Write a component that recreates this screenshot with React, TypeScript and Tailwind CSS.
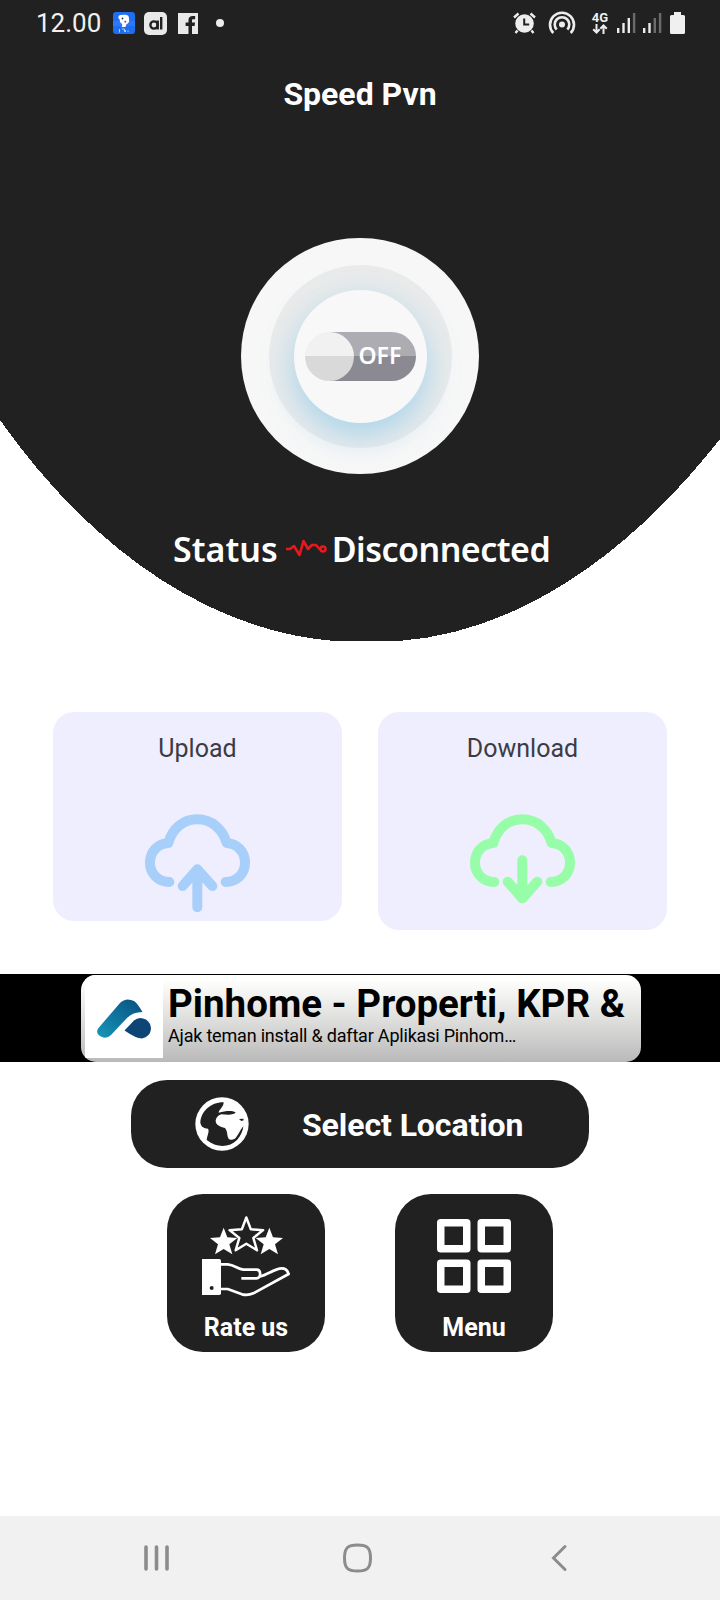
import type { ReactNode } from "react";

const INK = "#212121";

function StatusBar() {
  return (
    <div className="flex h-[46px] items-center pl-[36px] pr-[35px] text-[#f0f0f0]">
      <span className="w-[77px] text-[26px] leading-none">12.00</span>

      <svg width="22" height="22" viewBox="0 0 22 22">
        <rect width="22" height="22" rx="3" fill="#1f6df0" />
        <path d="M0 9h22v5H0z" fill="#3a86f7" opacity=".5" />
        <path d="M5.500 4.500C6 3 8 3 10 2.800c4-.4 6.500 1 6 4.200.8 2-.5 4.500-2.800 5.500L12.500 15H8.800l.4-3C7 11 6.500 9 6.800 7.500 5.500 7 5.200 5.500 5.500 4.500z" fill="#fff" />
        <circle cx="9.500" cy="6.500" r=".9" fill="#234" />
        <circle cx="12.300" cy="9.800" r="1" fill="#d43a4a" />
        <path d="M6.500 17v3.500M9 17h2.500v3M12.500 18v2M15 18.500v1.500" stroke="#a9cdfb" strokeWidth="1" fill="none" />
      </svg>

      <span className="ml-[9px] flex h-[23px] w-[23px] items-center justify-center rounded-[5px] bg-[#e9e9e9]">
        <svg width="14" height="13" viewBox="0 0 14 13" fill="none" stroke={INK} strokeWidth="2.400">
          <circle cx="5" cy="8" r="3.600" />
          <path d="M8.700 3.500v9M12.200 0v12.500" />
        </svg>
      </span>

      <svg className="ml-[11px]" width="20" height="21" viewBox="0 0 21 21" preserveAspectRatio="none">
        <path d="M0 0h21v21H0z" fill="#e9e9e9" />
        <path d="M11 21v-8H8v-3.400h3V7.200C11 4.300 12.700 3 15.500 3H18v3.300h-2c-1 0-1.300.5-1.300 1.400v1.900h3.200L17.400 13h-2.700v8z" fill={INK} />
      </svg>

      <span className="ml-[18px] h-2 w-2 rounded-full bg-[#ededed]" />

      <div className="ml-auto flex items-center">
        {/* alarm */}
        <svg width="23" height="22" viewBox="0 0 23 22">
          <circle cx="11.500" cy="11.500" r="9.300" fill="#ededed" />
          <path d="M1 5.500l4.500-4M22 5.500l-4.500-4M4.500 18.500L2.500 21M18.500 18.500l2 2.500" stroke="#ededed" strokeWidth="2.400" />
          <path d="M11.200 6.500v6h5" stroke={INK} strokeWidth="2" fill="none" />
        </svg>
        {/* hotspot */}
        <svg className="ml-[12px]" width="28" height="24" viewBox="0 0 28 24" fill="none" stroke="#ededed" strokeWidth="2.600">
          <path d="M5.300 22A12 12 0 1 1 22.700 22" />
          <path d="M8.700 18.500a7.300 7.300 0 1 1 10.600 0" />
          <circle cx="14" cy="13.500" r="3" fill="#ededed" stroke="none" />
        </svg>
        <div className="ml-[15px] flex w-[18px] flex-col items-center">
          <span className="text-[13px] font-bold leading-[12px]">4G</span>
          <svg width="16" height="10" viewBox="0 0 16 10" fill="none" stroke="#ededed" strokeWidth="2">
            <path d="M4.500 0v8M1.200 5.200l3.300 3.300 3.200-3.300M11.500 10V2M8.300 4.800l3.200-3.300 3.300 3.300" />
          </svg>
        </div>
        <Signal className="ml-[8px]" strong={3} />
        <Signal className="ml-[7px]" strong={2} />
        <svg className="ml-[8px]" width="15" height="22" viewBox="0 0 15 22" fill="#f0f0f0">
          <path d="M4 0h7v3h2.500A1.500 1.500 0 0 1 15 4.500v16a1.500 1.500 0 0 1-1.500 1.500h-12A1.500 1.500 0 0 1 0 20.500v-16A1.500 1.500 0 0 1 1.500 3H4z" />
        </svg>
      </div>
    </div>
  );
}

function Signal({ strong, className }: { strong: number; className: string }) {
  const heights = [5, 10, 15, 20];
  return (
    <svg className={className} width="19" height="20" viewBox="0 0 19 20">
      {heights.map((h, i) => (
        <rect key={h} x={i * 5.3} y={20 - h} width="2.400" height={h} fill={i < strong ? "#ededed" : "#6b6b6b"} />
      ))}
    </svg>
  );
}

function PowerToggle() {
  return (
    <div className="flex h-[236px] w-[238px] items-center justify-center overflow-hidden rounded-full bg-[#f7f7f7]">
      <div className="flex h-[183px] w-[183px] items-center justify-center rounded-full bg-[#eaebeb]">
        <div className="flex h-[133px] w-[133px] items-center justify-center rounded-full bg-[#f8f8f8] shadow-[0_12px_32px_0px_rgba(150,205,235,0.8)]">
          <div className="flex h-[49px] w-[111px] items-center">
            <div className="z-10 h-[49px] w-[49px] shrink-0 rounded-full bg-[linear-gradient(#f1f1f1_50%,#d9d9d9_50%)]" />
            <div className="-ml-[25px] flex h-[49px] w-[87px] items-center rounded-r-full bg-[linear-gradient(#adacb3_50%,#8b8991_50%)] pb-px pl-[30px]">
              <span className="font-['Noto_Sans'] text-[23px] font-semibold leading-none text-white">OFF</span>
            </div>
          </div>
        </div>
      </div>
    </div>
  );
}

function CloudCard({ label, color, className, arrow }: { label: string; color: string; className: string; arrow: string }) {
  return (
    <div className={`flex w-[289px] flex-col items-center rounded-[21px] bg-[#efeeff] pt-[21px] ${className}`}>
      <span className="text-[25px] leading-8 text-[#3c3c44]">{label}</span>
      <svg
        className="mt-[48px]"
        width="107"
        height="100"
        viewBox="312 338 321 300"
        fill="none"
        stroke={color}
        strokeWidth="30"
        strokeLinecap="round"
        strokeLinejoin="round"
      >
        <path d="M388 545C355 545 330 520 330 487C330 454 353 430 385 428C397 384 430 357 472 357C514 357 548 385 560 428C592 430 615 454 615 487C615 520 590 545 557 545" />
        <path d={arrow} />
      </svg>
    </div>
  );
}

function AdBanner() {
  return (
    <div className="mt-[44px] flex h-[88px] justify-center bg-black pl-[2px] pt-px">
      <div className="flex h-[87px] w-[560px] overflow-hidden rounded-[15px] bg-[linear-gradient(#fffffd_5%,#e3e4e2_45%,#b9b9b9)]">
        <div className="ml-[4px] flex h-[83px] w-[78px] items-center justify-center bg-white">
          <svg className="mt-[5px]" width="54" height="40" viewBox="0 0 54 40">
            <defs>
              <linearGradient id="pinA" x1="0" y1="1" x2="1" y2="0">
                <stop offset="0" stopColor="#1597b8" />
                <stop offset="1" stopColor="#0a4f80" />
              </linearGradient>
            </defs>
            <path d="M1.500 29L23 4Q29-2 37 2Q41 5 45.500 13Q35 13 29 20L14 36Q9 41 3 37Q-2 34 1.500 29Z" fill="url(#pinA)" />
            <path d="M27.500 31.500L37 21.500Q42 17 49 20.500Q54 24 54 30Q53 38 45 39.500Q39 39.500 27.500 31.500Z" fill="#0d4577" />
          </svg>
        </div>
        <div className="ml-[5px] flex flex-col whitespace-nowrap pt-[9px] text-black">
          <span className="text-[38.500px] font-bold leading-10">Pinhome - Properti, KPR &amp;</span>
          <span className="text-[18px] leading-6 tracking-[-0.2px]">Ajak teman install &amp; daftar Aplikasi Pinhom…</span>
        </div>
      </div>
    </div>
  );
}

function GlobeIcon() {
  return (
    <svg width="54" height="54" viewBox="226 79 162 162">
      <circle cx="307" cy="160" r="80" fill="#fff" />
      <path
        d="M312 95C275 94 243 122 242 157C246 171 252 172 265 174C270 182 263 193 261 208C290 232 330 231 352 208C363 196 370 181 371 167C362 177 361 185 350 199C345 209 331 209 327 204C321 195 325 183 316 172C301 169 289 163 288 152C288 142 295 134 305 131C323 132 344 134 348 125C335 119 318 121 297 126C298 116 312 110 312 95Z"
        fill={INK}
      />
      <path d="M358 145l13-1 1 5-7 2z" fill={INK} />
    </svg>
  );
}

const STAR = "M0-42L11-13 41-11 17 8 26 38 0 22-26 38-17 8-41-11-11-13Z";

function RateIcon() {
  return (
    <svg width="90" height="82" viewBox="120 90 270 246">
      <path d={STAR} transform="translate(191 170)" fill="#fff" />
      <path d={STAR} transform="translate(328 170)" fill="#fff" />
      <path d={STAR} transform="translate(259 149) scale(1.230)" fill={INK} stroke="#fff" strokeWidth="6" strokeLinejoin="round" />
      <path d="M126 222h52q5 0 5 5v98q0 5-5 5h-52z" fill="#fff" />
      <circle cx="155" cy="309" r="6" fill={INK} />
      <path
        d="M183 238H203C225 240 232 252 250 254H290C304 255 304 279 289 280H244M299 275C320 270 342 254 358 251C375 247 382 254 386 267L280 325Q264 332 246 328L203 312H183"
        fill="none"
        stroke="#fff"
        strokeWidth="8"
        strokeLinejoin="round"
      />
    </svg>
  );
}

function MenuIcon() {
  return (
    <svg width="74" height="74" viewBox="0 0 74 74" fill="none" stroke="#fff" strokeWidth="7.500" strokeLinejoin="round">
      {[3.75, 44.25].map((y) =>
        [3.75, 44.25].map((x) => <rect key={`${x}-${y}`} x={x} y={y} width="26" height="26" />)
      )}
    </svg>
  );
}

function Tile({ label, children }: { label: string; children: ReactNode }) {
  return (
    <button className="flex h-[158px] w-[158px] flex-col items-center rounded-[36px] bg-[#212121] text-white">
      <div className="flex h-[118px] items-end justify-center">{children}</div>
      <span className="text-[25px] font-bold leading-8">{label}</span>
    </button>
  );
}

export default function App() {
  return (
    <div className="flex h-[1600px] w-[720px] flex-col overflow-hidden bg-white font-[Roboto,sans-serif]">
      <header className="relative isolate flex h-[641px] flex-col">
        <svg className="absolute inset-0 -z-10" width="720" height="641" viewBox="0 0 720 641" shapeRendering="crispEdges">
          <path d="M0 0H720V439C630 554 519 632 399 641H335C215 632 95 555 0 420Z" fill={INK} />
        </svg>

        <StatusBar />
        <h1 className="mt-6 text-center text-[32px] font-bold leading-[48px] text-white">Speed Pvn</h1>

        <div className="mt-[120px] flex justify-center">
          <PowerToggle />
        </div>

        <div className="mt-[55px] flex items-center pl-[173px] font-['Noto_Sans'] text-[34px] font-semibold leading-10 text-white">
          <span>Status</span>
          <svg className="ml-[8px] mr-[5px] shrink-0" width="41" height="20" viewBox="0 0 41 20" fill="none" stroke="#e8191d" strokeWidth="2.600" strokeLinejoin="round">
            <path d="M0 10h4l4-3 5.500 9 4-14 4.500 8 4-4h4l3.500 4h2" />
            <circle cx="37" cy="10" r="2.500" />
          </svg>
          <span className="tracking-[-0.5px]">Disconnected</span>
        </div>
      </header>

      <main className="flex flex-col">
        <div className="mt-[71px] flex items-start gap-[36px] pl-[53px]">
          <CloudCard label="Upload" color="#a8cefa" className="h-[209px]" arrow="M472 621V507M428 557L472 507 517 557" />
          <CloudCard label="Download" color="#98fda8" className="h-[218px]" arrow="M472 480V594M428 544L472 594 517 544" />
        </div>

        <AdBanner />

        <button className="ml-[131px] mt-[18px] flex h-[88px] w-[458px] items-center rounded-[36px] bg-[#212121] pl-[64px] text-white">
          <GlobeIcon />
          <span className="ml-[53px] pt-px text-[32px] font-bold tracking-[-0.08px]">Select Location</span>
        </button>

        <div className="mt-[26px] flex justify-center gap-[70px]">
          <Tile label="Rate us">
            <div className="mb-[15px] mr-[2px]">
              <RateIcon />
            </div>
          </Tile>
          <Tile label="Menu">
            <div className="mb-[19px]">
              <MenuIcon />
            </div>
          </Tile>
        </div>
      </main>

      <nav className="mt-auto flex h-[84px] items-center bg-[#f1f1f1] pb-px pl-[143px]">
        <svg width="28" height="28" viewBox="0 0 28 28" stroke="#8c8c8c" strokeWidth="3.600" strokeLinecap="round">
          <path d="M3 3v22M13.500 3v22M24 3v22" />
        </svg>
        <svg className="ml-[171px]" width="30" height="30" viewBox="0 0 30 30" fill="none" stroke="#8c8c8c" strokeWidth="3">
          <path d="M15.500 2C25.500 2 28.500 5 28.500 15S25.500 28 15.500 28 2.500 25 2.500 15 5.500 2 15.500 2Z" />
        </svg>
        <svg className="ml-[179px]" width="17" height="28" viewBox="0 0 17 28" fill="none" stroke="#8c8c8c" strokeWidth="3" strokeLinecap="round">
          <path d="M14 2.500L2.500 14 14 25.500" />
        </svg>
      </nav>
    </div>
  );
}
